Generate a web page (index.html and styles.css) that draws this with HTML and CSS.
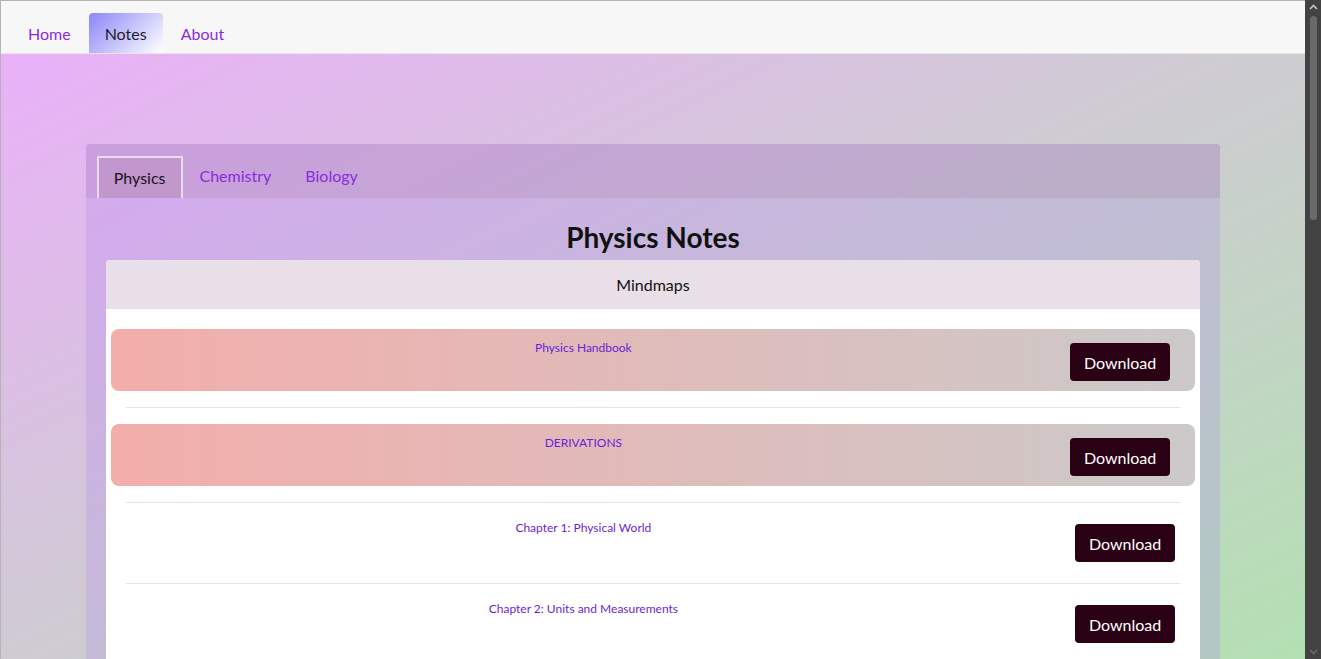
FILE: index.html
```html
<!DOCTYPE html>
<html lang="en">
<head>
    <meta charset="UTF-8">
    <meta name="viewport" content="width=device-width, initial-scale=1.0">
    <title>Notes</title>
    <link rel="stylesheet" href="styles.css">
</head>
<body>
    <nav class="topnav">
        <a href="#" class="nav-link">Home</a>
        <a href="#" class="nav-link active">Notes</a>
        <a href="#" class="nav-link">About</a>
    </nav>

    <main class="page">
        <section class="subject-card">
            <div class="subject-tabs">
                <a href="#" class="subject-tab active">Physics</a>
                <a href="#" class="subject-tab">Chemistry</a>
                <a href="#" class="subject-tab">Biology</a>
            </div>

            <div class="subject-body">
                <h2 class="subject-title">Physics Notes</h2>

                <div class="notes-card">
                    <div class="notes-header">Mindmaps</div>
                    <div class="notes-list">
                        <div class="note-row featured">
                            <a href="#" class="note-name">Physics Handbook</a>
                            <button class="download-btn">Download</button>
                        </div>
                        <hr class="note-sep">
                        <div class="note-row featured">
                            <a href="#" class="note-name">DERIVATIONS</a>
                            <button class="download-btn">Download</button>
                        </div>
                        <hr class="note-sep">
                        <div class="note-row">
                            <a href="#" class="note-name">Chapter 1: Physical World</a>
                            <button class="download-btn">Download</button>
                        </div>
                        <hr class="note-sep">
                        <div class="note-row">
                            <a href="#" class="note-name">Chapter 2: Units and Measurements</a>
                            <button class="download-btn">Download</button>
                        </div>
                        <hr class="note-sep">
                        <div class="note-row">
                            <a href="#" class="note-name">Chapter 3: Motion in a Straight Line</a>
                            <button class="download-btn">Download</button>
                        </div>
                        <hr class="note-sep">
                        <div class="note-row">
                            <a href="#" class="note-name">Chapter 4: Motion in a Plane</a>
                            <button class="download-btn">Download</button>
                        </div>
                        <hr class="note-sep">
                        <div class="note-row">
                            <a href="#" class="note-name">Chapter 5: Laws of Motion</a>
                            <button class="download-btn">Download</button>
                        </div>
                        <hr class="note-sep">
                        <div class="note-row">
                            <a href="#" class="note-name">Chapter 6: Work, Energy and Power</a>
                            <button class="download-btn">Download</button>
                        </div>
                        <hr class="note-sep">
                        <div class="note-row">
                            <a href="#" class="note-name">Chapter 7: System of Particles and Rotational Motion</a>
                            <button class="download-btn">Download</button>
                        </div>
                        <hr class="note-sep">
                        <div class="note-row">
                            <a href="#" class="note-name">Chapter 8: Gravitation</a>
                            <button class="download-btn">Download</button>
                        </div>
                        <hr class="note-sep">
                        <div class="note-row">
                            <a href="#" class="note-name">Chapter 9: Mechanical Properties of Solids</a>
                            <button class="download-btn">Download</button>
                        </div>
                        <hr class="note-sep">
                        <div class="note-row">
                            <a href="#" class="note-name">Chapter 10: Mechanical Properties of Fluids</a>
                            <button class="download-btn">Download</button>
                        </div>
                        <hr class="note-sep">
                        <div class="note-row">
                            <a href="#" class="note-name">Chapter 11: Thermal Properties of Matter</a>
                            <button class="download-btn">Download</button>
                        </div>
                        <hr class="note-sep">
                        <div class="note-row">
                            <a href="#" class="note-name">Chapter 12: Thermodynamics</a>
                            <button class="download-btn">Download</button>
                        </div>
                        <hr class="note-sep">
                        <div class="note-row">
                            <a href="#" class="note-name">Chapter 13: Kinetic Theory</a>
                            <button class="download-btn">Download</button>
                        </div>
                        <hr class="note-sep">
                        <div class="note-row">
                            <a href="#" class="note-name">Chapter 14: Oscillations</a>
                            <button class="download-btn">Download</button>
                        </div>
                        <hr class="note-sep">
                        <div class="note-row">
                            <a href="#" class="note-name">Chapter 15: Waves</a>
                            <button class="download-btn">Download</button>
                        </div>
                    </div>
                </div>
            </div>
        </section>
    </main>

    <!-- window scrollbar -->
    <div class="scrollbar">
        <svg class="scroll-arrow" width="16" height="14" viewBox="0 0 16 14">
            <path d="M5 9 L8.5 5.5 L12 9" fill="none" stroke="#c4c4c4" stroke-width="1.6"/>
        </svg>
        <div class="scroll-thumb"></div>
        <svg class="scroll-arrow bottom" width="16" height="14" viewBox="0 0 16 14">
            <path d="M5 5 L8.5 8.5 L12 5" fill="none" stroke="#6a6a6a" stroke-width="1.6"/>
        </svg>
    </div>
</body>
</html>
```

FILE: styles.css
```css
body {
    font-family: Lato, "Open Sans", sans-serif;
    margin: 0;
    padding: 0 16px 0 0;
    color: #111;
    min-height: 100vh;
    background: linear-gradient(to bottom right, #ecaefc, #cfcbd3 50%, #b3e0b2);
    background-attachment: fixed;
    border-top: 1px solid #b4b4b4;
    border-left: 1px solid #b4b4b4;
}

/* top navigation */
.topnav {
    display: flex;
    align-items: flex-end;
    gap: 2px;
    height: 52px;
    padding-left: 11px;
    background-color: #f7f7f7;
    border-bottom: 1px solid #e6e6e6;
}

.nav-link {
    display: flex;
    align-items: center;
    height: 40px;
    padding: 0 16px;
    box-sizing: border-box;
    font-size: 16px;
    color: #8a2be2;
    text-decoration: none;
    border-radius: 4px 4px 0 0;
}

.nav-link.active {
    color: #1c1c2a;
    background: linear-gradient(135deg, #8c87f9, #ffffff);
}

.page {
    padding-top: 90px;
    padding-bottom: 300px;
}

/* subject card with tabs */
.subject-card {
    width: 87%;
    margin: 0 auto;
    border-radius: 4px;
    background-color: rgba(158, 115, 246, 0.2);
    overflow: hidden;
}

.subject-tabs {
    display: flex;
    align-items: flex-end;
    height: 54px;
    padding-left: 11px;
    box-sizing: border-box;
    background-color: rgba(150, 100, 120, 0.15);
}

.subject-tab {
    display: flex;
    align-items: center;
    height: 42px;
    padding: 0 15px 6px;
    border: 2px solid transparent;
    border-bottom: none;
    box-sizing: border-box;
    font-size: 16px;
    color: #8a2be2;
    text-decoration: none;
}

.subject-tab.active {
    color: #1a1020;
    border-color: rgba(255, 255, 255, 0.65);
    background-color: rgba(150, 100, 120, 0.15);
    padding-bottom: 2px;
}

.subject-body {
    padding: 22px 20px 40px;
}

.subject-title {
    margin: 0 0 6px;
    text-align: center;
    font-size: 28px;
    font-weight: 700;
    line-height: 34px;
}

/* notes list */
.notes-card {
    background-color: #fff;
    border-radius: 4px;
    overflow: hidden;
}

.notes-header {
    height: 49px;
    display: flex;
    align-items: center;
    justify-content: center;
    background-color: #e9dfe8;
    font-size: 16px;
}

.notes-list {
    padding: 20px 20px 30px;
}

.note-row {
    display: flex;
    align-items: center;
    padding: 5px;
}

.note-row.featured {
    margin: 0 -15px;
    padding: 14px 25px 10px;
    border-radius: 8px;
    background: linear-gradient(to right, #f3aeab, #ccc9c9);
}

.note-name {
    flex: 1;
    align-self: flex-start;
    margin-top: -4px;
    text-align: center;
    font-size: 12px;
    line-height: 16px;
    color: #6a1fd6;
    text-decoration: none;
}

.note-row.featured .note-name {
    margin-top: -3px;
}

.download-btn {
    margin-left: 39px;
    height: 38px;
    padding: 0 14px;
    border: none;
    border-radius: 4px;
    background-color: #2a0014;
    color: #fff;
    font-family: inherit;
    font-size: 16px;
    cursor: pointer;
}

.note-sep {
    margin: 16px 0;
    border: 0;
    border-top: 1px solid #e4e4e4;
}

/* scrollbar drawn over the right edge of the window */
.scrollbar {
    position: fixed;
    top: 0;
    right: 0;
    width: 16px;
    height: 100vh;
    display: flex;
    flex-direction: column;
    align-items: center;
    background-color: #424242;
}

.scroll-arrow {
    flex-shrink: 0;
}

.scroll-arrow.bottom {
    margin-top: auto;
}

.scroll-thumb {
    width: 7px;
    height: 204px;
    margin-top: 2px;
    border-radius: 4px;
    background-color: #6a6a6a;
}
```
